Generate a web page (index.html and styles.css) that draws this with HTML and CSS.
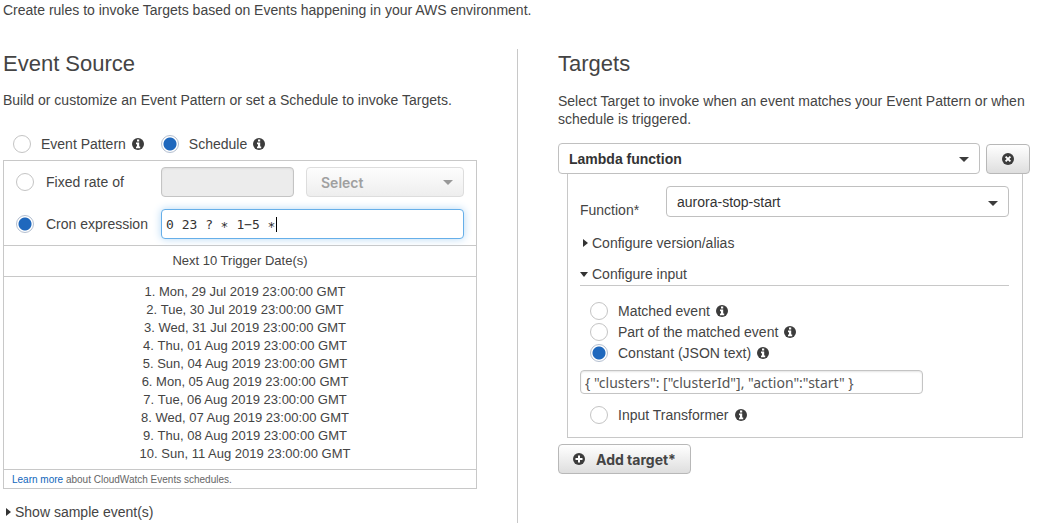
FILE: index.html
```html
<!DOCTYPE html>
<html lang="en">
<head>
<meta charset="utf-8">
<title>Create rule</title>
<link rel="stylesheet" href="styles.css">
</head>
<body>
<svg class="sprite" aria-hidden="true">
  <symbol id="info" viewBox="0 0 12 12">
    <circle cx="6" cy="6" r="6" fill="#3c3c3c"/>
    <path d="M5 1.5h2.2v2H5zM4 4.5h3.2v4.1h1v1.7H4V8.6h1V6.2H4z" fill="#fff"/>
  </symbol>
  <symbol id="remove" viewBox="0 0 12 12">
    <circle cx="6" cy="6" r="6" fill="#3c3c3c"/>
    <path d="M3.6 3.6l4.8 4.8M8.4 3.6l-4.8 4.8" stroke="#fff" stroke-width="1.9"/>
  </symbol>
  <symbol id="plus" viewBox="0 0 12 12">
    <circle cx="6" cy="6" r="6" fill="#3c3c3c"/>
    <path d="M6 2.5v7M2.5 6h7" stroke="#fff" stroke-width="2"/>
  </symbol>
</svg>
<p class="intro">Create rules to invoke Targets based on Events happening in your AWS environment.</p>
<main class="columns">
  <section class="source">
    <h2 class="heading">Event Source</h2>
    <p class="lead">Build or customize an Event Pattern or set a Schedule to invoke Targets.</p>
    <div class="modes">
      <label class="option"><input class="radio" type="radio" name="mode">Event Pattern<svg class="icon"><use href="#info"/></svg></label>
      <label class="option"><input class="radio" type="radio" name="mode" checked>Schedule<svg class="icon"><use href="#info"/></svg></label>
    </div>
    <div class="box">
      <div class="schedule">
        <label class="option"><input class="radio" type="radio" name="schedule">Fixed rate of</label>
        <div class="rate">
          <input class="field field-disabled" type="text" aria-label="Rate value" disabled>
          <div class="picker picker-disabled">
            <select class="select" aria-label="Rate unit" disabled><option>Select</option></select>
          </div>
        </div>
        <label class="option"><input class="radio" type="radio" name="schedule" checked>Cron expression</label>
        <div class="cron">
          <input class="field field-cron" type="text" aria-label="Cron value" value="0 23 ? ∗ 1−5 ∗">
          <span class="caret"></span>
        </div>
      </div>
      <h3 class="box-title">Next 10 Trigger Date(s)</h3>
      <ol class="dates">
        <li>Mon, 29 Jul 2019 23:00:00 GMT</li>
        <li>Tue, 30 Jul 2019 23:00:00 GMT</li>
        <li>Wed, 31 Jul 2019 23:00:00 GMT</li>
        <li>Thu, 01 Aug 2019 23:00:00 GMT</li>
        <li>Sun, 04 Aug 2019 23:00:00 GMT</li>
        <li>Mon, 05 Aug 2019 23:00:00 GMT</li>
        <li>Tue, 06 Aug 2019 23:00:00 GMT</li>
        <li>Wed, 07 Aug 2019 23:00:00 GMT</li>
        <li>Thu, 08 Aug 2019 23:00:00 GMT</li>
        <li>Sun, 11 Aug 2019 23:00:00 GMT</li>
      </ol>
      <p class="note"><a class="link" href="#schedules">Learn more</a> about CloudWatch Events schedules.</p>
    </div>
    <button class="toggle sample" type="button"><span class="arrow-right"></span>Show sample event(s)</button>
  </section>
  <section class="targets">
    <h2 class="heading">Targets</h2>
    <p class="lead lead-targets">Select Target to invoke when an event matches your Event Pattern or when schedule is triggered.</p>
    <div class="target-row">
      <div class="picker picker-target">
        <select class="select" aria-label="Target type"><option>Lambda function</option></select>
      </div>
      <button class="button" type="button" aria-label="Remove target"><svg class="icon"><use href="#remove"/></svg></button>
    </div>
    <div class="panel">
      <div class="function-row">
        <label class="function-label" for="function">Function*</label>
        <div class="picker"><select class="select" id="function"><option>aurora-stop-start</option></select></div>
      </div>
      <button class="toggle" type="button"><span class="arrow-right"></span>Configure version/alias</button>
      <button class="toggle toggle-open" type="button"><span class="arrow-down"></span>Configure input</button>
      <div class="inputs">
        <label class="option"><input class="radio" type="radio" name="input">Matched event<svg class="icon"><use href="#info"/></svg></label>
        <label class="option"><input class="radio" type="radio" name="input">Part of the matched event<svg class="icon"><use href="#info"/></svg></label>
        <label class="option"><input class="radio" type="radio" name="input" checked>Constant (JSON text)<svg class="icon"><use href="#info"/></svg></label>
      </div>
      <input class="json" type="text" aria-label="Constant JSON" value="{ &quot;clusters&quot;: [&quot;clusterId&quot;], &quot;action&quot;:&quot;start&quot; }">
      <div class="inputs inputs-last">
        <label class="option"><input class="radio" type="radio" name="input">Input Transformer<svg class="icon"><use href="#info"/></svg></label>
      </div>
    </div>
    <button class="button button-add" type="button"><svg class="icon"><use href="#plus"/></svg>Add target*</button>
  </section>
</main>
</body>
</html>
```

FILE: styles.css
```css
* { box-sizing: border-box; }

body {
  margin: 0;
  padding: 1px 9px 9px 3px;
  background: #fff;
  color: #444;
  font: 14px/18px "Liberation Sans", Arial, sans-serif;
}

p, h2, h3, ol { margin: 0; }

.sprite { display: none; }

.columns {
  display: grid;
  grid-template-columns: 515fr 512fr;
  margin-top: 30px;
}

.source {
  padding-right: 40px;
  border-right: 1px solid #c8c8c8;
}

.targets { padding-left: 40px; }

.heading {
  padding-top: 1px;
  font-size: 22px;
  line-height: 28px;
  font-weight: 400;
}

.lead { margin-top: 13px; }
.lead-targets { margin-top: 14px; }

.option {
  display: flex;
  align-items: center;
}

.radio {
  appearance: none;
  flex: none;
  width: 18px;
  height: 18px;
  margin: 0 10px 0 0;
  border: 1px solid #c4c4c4;
  border-radius: 50%;
  background: #fff;
}

.radio:checked {
  border-color: #b4bfd0;
  background: radial-gradient(circle, #1f68bd 0 6px, #fff 7px);
}

.icon {
  flex: none;
  width: 12px;
  height: 12px;
}

.option .icon { margin-left: 6px; }

.modes {
  display: flex;
  gap: 17px;
  margin-top: 26px;
  padding-left: 10px;
}

.box {
  margin-top: 7px;
  border: 1px solid #c8c8c8;
}

.schedule {
  display: grid;
  grid-template-columns: 145px 1fr;
  row-gap: 12px;
  padding: 6px 12px;
}

.schedule .radio { margin-right: 12px; }

.rate {
  display: grid;
  grid-template-columns: 133fr 158fr;
  gap: 12px;
}

.field {
  display: block;
  width: 100%;
  height: 30px;
  padding: 0 4px;
  border: 1px solid #c4c4c4;
  border-radius: 4px;
  color: #333;
  font: 13px "DejaVu Sans Mono", monospace;
}

.field-disabled {
  background: #ececec;
  box-shadow: inset 0 1px 2px #ddd;
}

.cron { position: relative; }

.field-cron {
  border-color: #66afe9;
  box-shadow: 0 0 8px #b5d8f5;
  outline: none;
}

.caret {
  position: absolute;
  top: 8px;
  left: 115px;
  width: 1px;
  height: 15px;
  background: #000;
}

.picker {
  position: relative;
  min-width: 0;
}

.picker::after {
  content: "";
  position: absolute;
  top: 50%;
  right: 11px;
  margin-top: -2px;
  border: 5px solid transparent;
  border-top-color: #3c3c3c;
  border-bottom: 0;
  pointer-events: none;
}

.select {
  appearance: none;
  display: block;
  width: 100%;
  height: 31px;
  padding: 0 24px 0 10px;
  border: 1px solid #c0c0c0;
  border-radius: 4px;
  background: #fff;
  color: #333;
  font: 14px "Liberation Sans", Arial, sans-serif;
}

.picker-target .select { font-weight: 700; }

.picker-disabled::after { border-top-color: #999; }

.picker-disabled .select {
  height: 30px;
  padding-left: 14px;
  border-color: #ddd;
  background: linear-gradient(#fdfdfd, #eee);
  color: #a0a0a0;
  font: 600 14px Inter, sans-serif;
  opacity: 1;
}

.box-title {
  padding: 6px 0;
  border: solid #c8c8c8;
  border-width: 1px 0;
  font-size: 13px;
  font-weight: 400;
  text-align: center;
}

.dates {
  padding: 6px 0;
  border-bottom: 1px solid #c8c8c8;
  font-size: 13px;
  list-style-position: inside;
  text-align: center;
}

.dates li { padding-left: 10px; }

.note {
  padding: 1px 8px 0;
  color: #666;
  font-size: 10px;
  line-height: 17px;
}

.link {
  color: #1166bb;
  text-decoration: none;
}

.toggle {
  display: flex;
  align-items: center;
  gap: 4px;
  width: 100%;
  padding: 0;
  border: 0;
  background: none;
  color: #444;
  font: inherit;
  text-align: left;
}

.sample {
  margin-top: 14px;
  padding-bottom: 2px;
}

.arrow-right {
  margin-left: 3px;
  border: 4px solid transparent;
  border-left: 5px solid #333;
  border-right: 0;
}

.arrow-down {
  border: 4px solid transparent;
  border-top: 5px solid #333;
  border-bottom: 0;
}

.target-row {
  display: grid;
  grid-template-columns: 1fr 44px;
  align-items: end;
  gap: 6px;
  margin-top: 15px;
}

.button {
  display: flex;
  align-items: center;
  justify-content: center;
  height: 30px;
  padding: 0 14px;
  border: 1px solid #b8b8b8;
  border-radius: 4px;
  background: linear-gradient(#fff, #dedede);
  color: #444;
  font: 700 14px Inter, sans-serif;
}

.button-add {
  gap: 11px;
  margin-top: 6px;
}

.panel {
  margin: 0 7px 0 9px;
  padding: 12px 13px 13px 12px;
  border: 1px solid #c8c8c8;
  border-top: 0;
}

.function-row {
  display: grid;
  grid-template-columns: 86px 1fr;
  margin-bottom: 15px;
}

.function-label { padding-top: 15px; }

.toggle-open {
  margin-top: 13px;
  padding-bottom: 2px;
  border-bottom: 1px solid #c8c8c8;
}

.inputs {
  display: grid;
  gap: 3px;
  margin-top: 16px;
  padding-left: 10px;
}

.inputs-last { margin-top: 12px; }

.json {
  display: block;
  width: 80%;
  height: 24px;
  margin-top: 8px;
  padding: 0 4px;
  border: 1px solid #c4c4c4;
  border-radius: 4px;
  box-shadow: inset 0 1px 2px #e4e4e4;
  color: #555;
  font: 14px "Noto Sans", sans-serif;
}
```
